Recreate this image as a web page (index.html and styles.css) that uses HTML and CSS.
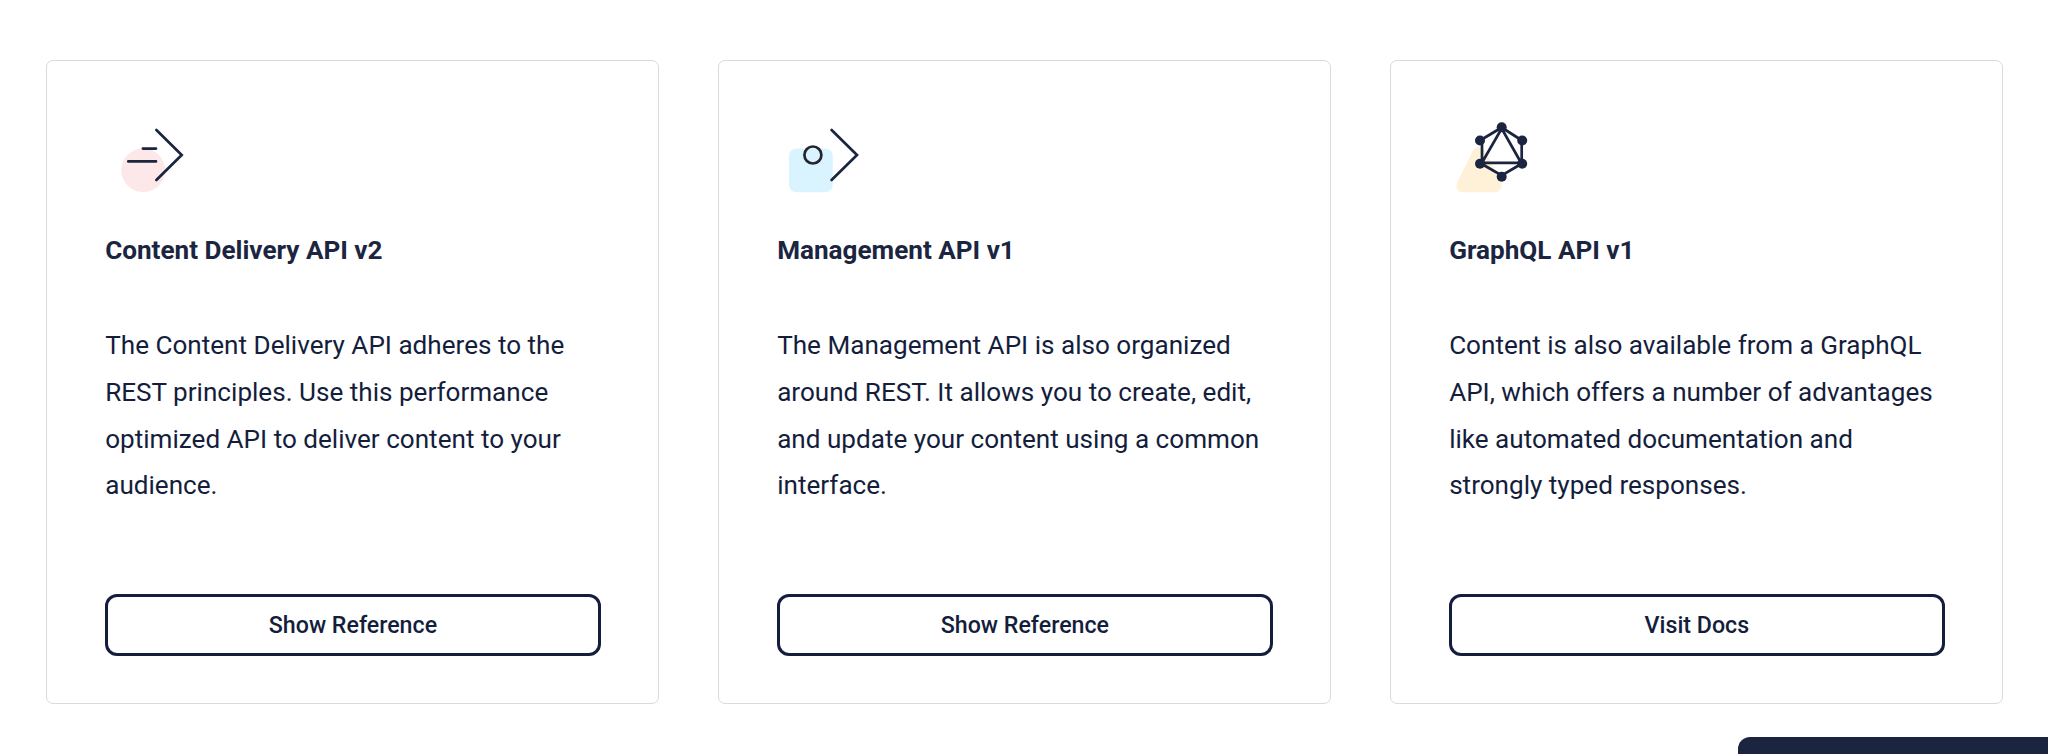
FILE: index.html
```html
<!DOCTYPE html>
<html lang="en">
<head>
<meta charset="utf-8">
<title>API reference</title>
<link rel="stylesheet" href="styles.css">
</head>
<body>
<main class="cards">
  <section class="card">
    <svg class="icon" viewBox="105 120 110 90" aria-hidden="true">
      <circle cx="143.2" cy="170.2" r="21.9" fill="#fde8e9"/>
      <path class="stroke" d="M142.9 148.6H156M128.3 161.4H156M156.4 130L181.7 155L156.4 180"/>
    </svg>
    <h2 class="title">Content Delivery API v2</h2>
    <p class="text">The Content Delivery API adheres to the REST principles. Use this performance optimized API to deliver content to your audience.</p>
    <a class="button">Show Reference</a>
  </section>
  <section class="card">
    <svg class="icon" viewBox="777 120 110 90" aria-hidden="true">
      <rect x="789" y="148.4" width="43.8" height="43.8" rx="7.5" fill="#daf4ff"/>
      <circle class="ring" cx="812.9" cy="155" r="8.5"/>
      <path class="stroke" d="M831.6 130L857 155L831.6 180"/>
    </svg>
    <h2 class="title">Management API v1</h2>
    <p class="text">The Management API is also organized around REST. It allows you to create, edit, and update your content using a common interface.</p>
    <a class="button">Show Reference</a>
  </section>
  <section class="card">
    <svg class="icon" viewBox="1449 120 110 90" aria-hidden="true">
      <path d="M1472.5 151.6Q1474.5 147.5 1479 147.5Q1483.5 147.5 1485.5 151.6L1500.6 181.8Q1502.8 187 1499.5 190.5Q1498 192.2 1494.5 192.2H1463.5Q1459 192.2 1457 189Q1455.5 186 1457.2 182.5Z" fill="#fff1d7"/>
      <path class="graph" d="M1501.7 127.5L1522 140.5M1501.7 127.5L1480 140.5M1482 140.5V163.5M1521.7 140.5V163.5M1481 162.8H1522M1481 163.5L1501.7 175.5L1522 163.5M1481.5 163.5L1501.7 128.5L1521.5 163.5"/>
      <g fill="#1b2540">
        <circle cx="1501.7" cy="127.3" r="5"/>
        <circle cx="1480" cy="140.5" r="5"/>
        <circle cx="1522.2" cy="140.5" r="5"/>
        <circle cx="1480" cy="163.8" r="5"/>
        <circle cx="1522.2" cy="163.8" r="5"/>
        <circle cx="1501.7" cy="176.8" r="5"/>
      </g>
    </svg>
    <h2 class="title">GraphQL API v1</h2>
    <p class="text">Content is also available from a GraphQL API, which offers a number of advantages like automated documentation and strongly typed responses.</p>
    <a class="button">Visit Docs</a>
  </section>
</main>
<div class="dock"></div>
</body>
</html>
```
FILE: styles.css
```css
body {
  margin: 0;
  height: 754px;
  overflow: hidden;
  background: #fff;
  color: #141e3c;
  font-family: Roboto, sans-serif;
}

.cards {
  display: grid;
  grid-template-columns: repeat(3, 1fr);
  gap: 58.7px;
  padding: 60px 44.6px 0 46.2px;
}

.card {
  box-sizing: border-box;
  height: 644.4px;
  display: flex;
  flex-direction: column;
  padding: 58.9px 57.8px 47.5px 58px;
  border: 1px solid #dadada;
  border-radius: 7px;
}

.icon {
  width: 110px;
  height: 90px;
}

.stroke,
.ring,
.graph {
  fill: none;
  stroke: #1b2540;
  stroke-width: 2.7;
  stroke-linecap: round;
  stroke-linejoin: miter;
}

.ring {
  stroke: #22262e;
}

.title {
  margin: 17.3px 0 48.1px;
  font-size: 26.1px;
  line-height: 46.8px;
  font-weight: 700;
  color: #1b2540;
}

.text {
  margin: 0;
  font-size: 26.1px;
  line-height: 46.8px;
}

.button {
  box-sizing: border-box;
  height: 62px;
  margin-top: auto;
  display: flex;
  align-items: center;
  justify-content: center;
  border: 3px solid #141e3c;
  border-radius: 12px;
  font-size: 23.2px;
  font-weight: 500;
}

.dock {
  position: absolute;
  right: 0;
  bottom: 0;
  width: 310.5px;
  height: 17.4px;
  background: #1b2540;
  border-top-left-radius: 12px;
}
```
